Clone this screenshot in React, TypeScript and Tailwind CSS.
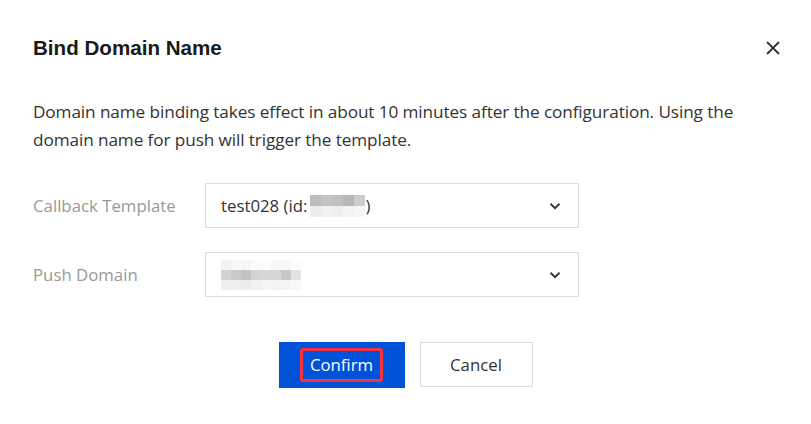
import { ReactNode } from "react";

const Chevron = () => (
    <svg width="14" height="14" viewBox="0 0 14 14" fill="none">
        <path d="M2.5 4.75 L7 9.25 L11.5 4.75" stroke="#333" strokeWidth="1.8" />
    </svg>
);

const Pixels = ({ rows, cell }: { rows: string[][]; cell: number }) => (
    <div className="flex flex-col blur-[0.6px]">
        {rows.map((row, r) => (
            <div key={r} className="flex">
                {row.map((c, i) => (
                    <div key={i} style={{ width: cell, height: cell, background: c }} />
                ))}
            </div>
        ))}
    </div>
);

const Select = ({ children }: { children: ReactNode }) => (
    <div className="w-[374px] h-[45px] border border-[#dcdcdc] flex items-center justify-between pl-[15px] pr-[16px]">
        <div className="flex items-center">{children}</div>
        <Chevron />
    </div>
);

const FormRow = ({ label, children }: { label: string; children: ReactNode }) => (
    <div className="flex items-center">
        <div className="w-[172px] text-[16.8px] text-[#999999]">{label}</div>
        {children}
    </div>
);

export default function App() {
    return (
        <div
            className="w-[811px] h-[424px] bg-white px-[33px] pt-[34px] text-[#333333]"
            style={{ fontFamily: '"Open Sans", "Noto Sans", sans-serif' }}
        >
            <div className="flex items-center justify-between">
                <h1
                    className="text-[20.6px] leading-[28px] font-bold text-[#1a1a1a]"
                    style={{ fontFamily: '"Liberation Sans", Arial, sans-serif' }}
                >
                    Bind Domain Name
                </h1>
                <svg width="14" height="14" viewBox="0 0 14 14" className="mr-[-2px]">
                    <path d="M1 1 L13 13 M13 1 L1 13" stroke="#333" strokeWidth="1.8" />
                </svg>
            </div>

            <p className="mt-[36px] text-[17.2px] leading-[28px] tracking-[-0.1px] whitespace-nowrap">
                Domain name binding takes effect in about 10 minutes after the configuration. Using the
                <br />
                domain name for push will trigger the template.
            </p>

            <div className="mt-[29px] flex flex-col gap-[24px]">
                <FormRow label="Callback Template">
                    <Select>
                        <span className="text-[16.8px]">test028 (id:</span>
                        <div className="ml-[3px]">
                            <Pixels
                                cell={11}
                                rows={[
                                    ["#bdbdbd", "#c4c4c4", "#c0c0c0", "#b6b6b6", "#cdcdcd"],
                                    ["#ededed", "#f2f2f2", "#efefef", "#f3f3f3", "#f6f6f6"],
                                ]}
                            />
                        </div>
                        <span className="text-[16.8px]">)</span>
                    </Select>
                </FormRow>
                <FormRow label="Push Domain">
                    <Select>
                        <Pixels
                            cell={10}
                            rows={[
                                ["#f2f2f2", "#f9f9f9", "#f6f6f6", "#fbfbfb", "#fcfcfc", "#f7f7f7", "#f8f8f8", "#fcfcfc"],
                                ["#d2d2d2", "#cacaca", "#c4c4c4", "#d3d3d3", "#d6d6d6", "#d4d4d4", "#c8c8c8", "#e3e3e3"],
                                ["#eeeeee", "#efefef", "#ececec", "#f1f1f1", "#f5f5f5", "#f3f3f3", "#f4f4f4", "#f8f8f8"],
                            ]}
                        />
                    </Select>
                </FormRow>
            </div>

            <div className="mt-[45px] flex justify-center gap-[15px]">
                <button className="w-[126px] h-[46px] bg-[#0052d9] flex items-center justify-center">
                    <span className="border-[3px] border-[#f5333f] rounded-[3px] px-[7px] h-[34px] flex items-center text-white text-[16.8px]">
                        Confirm
                    </span>
                </button>
                <button className="w-[113px] h-[45px] border border-[#dcdcdc] text-[16.8px] text-[#333333]">
                    Cancel
                </button>
            </div>
        </div>
    );
}
